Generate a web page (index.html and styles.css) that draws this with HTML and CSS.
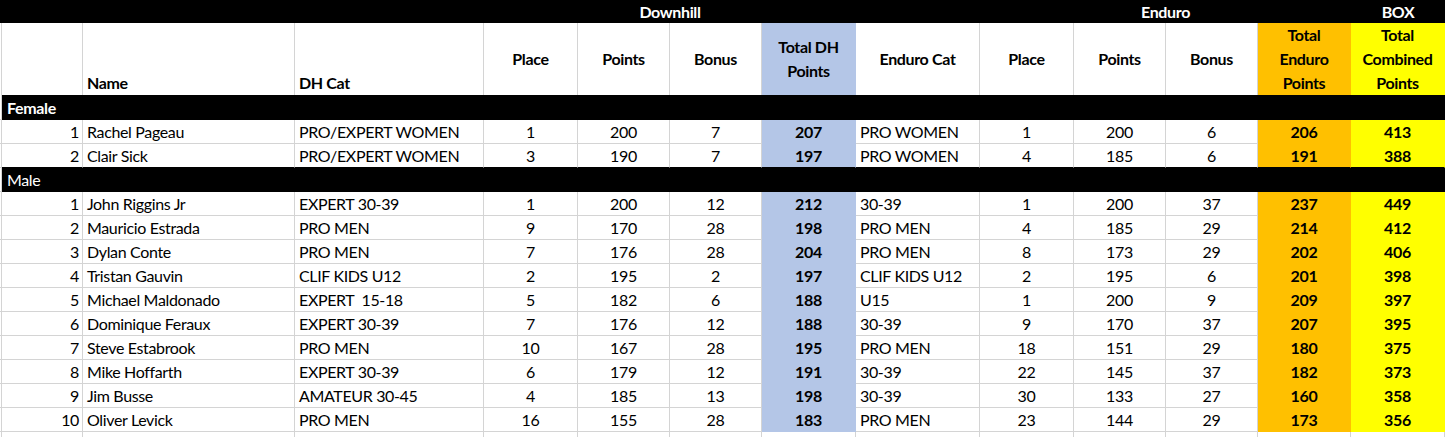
FILE: index.html
```html
<!DOCTYPE html>
<html>
<head>
<meta charset="utf-8">
<link rel="stylesheet" href="styles.css">
</head>
<body>
<div class="sheet">
  <div class="row top">
    <div class="t-blank1"></div>
    <div class="t-dh">Downhill</div>
    <div class="t-blank2"></div>
    <div class="t-en">Enduro</div>
    <div class="t-box">BOX</div>
  </div>
  <div class="row head">
    <div class="c"></div>
    <div class="c"></div>
    <div class="c hb">Name</div>
    <div class="c hb">DH Cat</div>
    <div class="c hc">Place</div>
    <div class="c hc">Points</div>
    <div class="c hc">Bonus</div>
    <div class="c hc blue">Total DH<br>Points</div>
    <div class="c hc">Enduro Cat</div>
    <div class="c hc">Place</div>
    <div class="c hc">Points</div>
    <div class="c hc">Bonus</div>
    <div class="c hc orange">Total<br>Enduro<br>Points</div>
    <div class="c hc yellow">Total<br>Combined<br>Points</div>
  </div>
  <div class="row bar first"><div class="c"></div><div class="bar-cell bold">Female</div></div>
  <div class="row"><div class="c"></div><div class="c r">1</div><div class="c">Rachel Pageau</div><div class="c">PRO/EXPERT WOMEN</div><div class="c m">1</div><div class="c m">200</div><div class="c m">7</div><div class="c m blue b">207</div><div class="c">PRO WOMEN</div><div class="c m">1</div><div class="c m">200</div><div class="c m">6</div><div class="c m orange b">206</div><div class="c m yellow b">413</div></div>
  <div class="row pre"><div class="c"></div><div class="c r">2</div><div class="c">Clair Sick</div><div class="c">PRO/EXPERT WOMEN</div><div class="c m">3</div><div class="c m">190</div><div class="c m">7</div><div class="c m blue b">197</div><div class="c">PRO WOMEN</div><div class="c m">4</div><div class="c m">185</div><div class="c m">6</div><div class="c m orange b">191</div><div class="c m yellow b">388</div></div>
  <div class="row bar"><div class="c"></div><div class="bar-cell">Male</div></div>
  <div class="row"><div class="c"></div><div class="c r">1</div><div class="c">John Riggins Jr</div><div class="c">EXPERT 30-39</div><div class="c m">1</div><div class="c m">200</div><div class="c m">12</div><div class="c m blue b">212</div><div class="c">30-39</div><div class="c m">1</div><div class="c m">200</div><div class="c m">37</div><div class="c m orange b">237</div><div class="c m yellow b">449</div></div>
  <div class="row"><div class="c"></div><div class="c r">2</div><div class="c">Mauricio Estrada</div><div class="c">PRO MEN</div><div class="c m">9</div><div class="c m">170</div><div class="c m">28</div><div class="c m blue b">198</div><div class="c">PRO MEN</div><div class="c m">4</div><div class="c m">185</div><div class="c m">29</div><div class="c m orange b">214</div><div class="c m yellow b">412</div></div>
  <div class="row"><div class="c"></div><div class="c r">3</div><div class="c">Dylan Conte</div><div class="c">PRO MEN</div><div class="c m">7</div><div class="c m">176</div><div class="c m">28</div><div class="c m blue b">204</div><div class="c">PRO MEN</div><div class="c m">8</div><div class="c m">173</div><div class="c m">29</div><div class="c m orange b">202</div><div class="c m yellow b">406</div></div>
  <div class="row"><div class="c"></div><div class="c r">4</div><div class="c">Tristan Gauvin</div><div class="c">CLIF KIDS U12</div><div class="c m">2</div><div class="c m">195</div><div class="c m">2</div><div class="c m blue b">197</div><div class="c">CLIF KIDS U12</div><div class="c m">2</div><div class="c m">195</div><div class="c m">6</div><div class="c m orange b">201</div><div class="c m yellow b">398</div></div>
  <div class="row"><div class="c"></div><div class="c r">5</div><div class="c">Michael Maldonado</div><div class="c">EXPERT  15-18</div><div class="c m">5</div><div class="c m">182</div><div class="c m">6</div><div class="c m blue b">188</div><div class="c">U15</div><div class="c m">1</div><div class="c m">200</div><div class="c m">9</div><div class="c m orange b">209</div><div class="c m yellow b">397</div></div>
  <div class="row"><div class="c"></div><div class="c r">6</div><div class="c">Dominique Feraux</div><div class="c">EXPERT 30-39</div><div class="c m">7</div><div class="c m">176</div><div class="c m">12</div><div class="c m blue b">188</div><div class="c">30-39</div><div class="c m">9</div><div class="c m">170</div><div class="c m">37</div><div class="c m orange b">207</div><div class="c m yellow b">395</div></div>
  <div class="row"><div class="c"></div><div class="c r">7</div><div class="c">Steve Estabrook</div><div class="c">PRO MEN</div><div class="c m">10</div><div class="c m">167</div><div class="c m">28</div><div class="c m blue b">195</div><div class="c">PRO MEN</div><div class="c m">18</div><div class="c m">151</div><div class="c m">29</div><div class="c m orange b">180</div><div class="c m yellow b">375</div></div>
  <div class="row"><div class="c"></div><div class="c r">8</div><div class="c">Mike Hoffarth</div><div class="c">EXPERT 30-39</div><div class="c m">6</div><div class="c m">179</div><div class="c m">12</div><div class="c m blue b">191</div><div class="c">30-39</div><div class="c m">22</div><div class="c m">145</div><div class="c m">37</div><div class="c m orange b">182</div><div class="c m yellow b">373</div></div>
  <div class="row"><div class="c"></div><div class="c r">9</div><div class="c">Jim Busse</div><div class="c">AMATEUR 30-45</div><div class="c m">4</div><div class="c m">185</div><div class="c m">13</div><div class="c m blue b">198</div><div class="c">30-39</div><div class="c m">30</div><div class="c m">133</div><div class="c m">27</div><div class="c m orange b">160</div><div class="c m yellow b">358</div></div>
  <div class="row"><div class="c"></div><div class="c r">10</div><div class="c">Oliver Levick</div><div class="c">PRO MEN</div><div class="c m">16</div><div class="c m">155</div><div class="c m">28</div><div class="c m blue b">183</div><div class="c">PRO MEN</div><div class="c m">23</div><div class="c m">144</div><div class="c m">29</div><div class="c m orange b">173</div><div class="c m yellow b">356</div></div>
  <div class="row"><div class="c"></div><div class="c"></div><div class="c"></div><div class="c"></div><div class="c"></div><div class="c"></div><div class="c"></div><div class="c"></div><div class="c"></div><div class="c"></div><div class="c"></div><div class="c"></div><div class="c"></div><div class="c"></div></div>
</div>
</body>
</html>
```
FILE: styles.css
```css
html, body {
  margin: 0;
  padding: 0;
  background: #fff;
}
.sheet {
  width: 1445px;
  font-family: Lato, "Liberation Sans", sans-serif;
  font-size: 16px;
  letter-spacing: -0.35px;
  color: #000;
}
.row {
  display: grid;
  grid-template-columns: 2px 81px 212px 189px 94px 92px 92px 94px 124px 94px 92px 92px 93px 94px;
  height: 24px;
  line-height: 24px;
}
.c {
  box-sizing: border-box;
  border-right: 1px solid #d4d4d4;
  border-bottom: 1px solid #d4d4d4;
  padding: 0 4px;
  white-space: pre;
  overflow: hidden;
}
.row > .c:first-child {
  padding: 0;
}
.r { text-align: right; padding-right: 3px; }
.m { text-align: center; }
.b { font-weight: 700; }
.bold { font-weight: 700; }
.blue { background: #b4c6e7; border-color: #b4c6e7; }
.orange { background: #ffc000; border-color: #ffc000; }
.yellow { background: #ffff00; border-color: #ffff00; }
.pre > .c { border-bottom-color: #000; }
.pre > .c:first-child { border-bottom-color: #d4d4d4; }

/* top title bar */
.row.top {
  height: 23px;
  line-height: 23px;
  background: #000;
  color: #fff;
  font-weight: 700;
}
.t-blank1 { grid-column: 1 / 5; }
.t-dh { grid-column: 5 / 9; text-align: center; }
.t-blank2 { grid-column: 9 / 10; }
.t-en { grid-column: 10 / 14; text-align: center; }
.t-box { grid-column: 14 / 15; text-align: center; }

/* header row */
.row.head {
  height: 72px;
  line-height: 24px;
  font-weight: 700;
}
.head .c {
  border-bottom: none;
  display: flex;
  flex-direction: column;
}
.head .hb {
  justify-content: flex-end;
  padding-bottom: 0;
}
.head .hc {
  justify-content: center;
  align-items: center;
  text-align: center;
  padding: 0;
}

/* section bars */
.row.bar {
  height: 24px;
}
.row.bar.first {
  height: 25px;
  line-height: 25px;
}
.bar-cell {
  grid-column: 2 / -1;
  background: #000;
  color: #fff;
  padding-left: 5px;
}
```
